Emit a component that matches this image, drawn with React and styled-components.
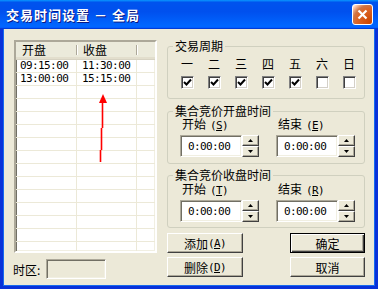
import React from "react";
import styled, { createGlobalStyle } from "styled-components";

const GlobalStyle = createGlobalStyle`
  html, body { margin: 0; padding: 0; background: #fff; }
  body {
    font-family: "Liberation Sans", "Noto Sans CJK SC", sans-serif;
    font-size: 12px;
    color: #000;
  }
  * { box-sizing: border-box; }
`;

const Window = styled.div`
  width: 378px;
  height: 289px;
  display: flex;
  flex-direction: column;
  overflow: hidden;
`;

const TitleBar = styled.div`
  height: 29px;
  flex: none;
  display: flex;
  align-items: center;
  justify-content: space-between;
  padding: 0 5px 0 6px;
  background: linear-gradient(
    180deg,
    #0997ff,
    #0053ee 8%,
    #0050ee 40%,
    #06f 88%,
    #06f 93%,
    #005bff 95%,
    #003dd7 96%,
    #003dd7
  );
`;

const Title = styled.div`
  color: #fff;
  font-family: "Noto Sans CJK SC", sans-serif;
  font-weight: 700;
  font-size: 13px;
  letter-spacing: 1px;
  text-shadow: 1px 1px #0a1883;
`;

const CloseButton = styled.div`
  width: 21px;
  height: 21px;
  border: 1px solid #fff;
  border-radius: 3px;
  display: flex;
  align-items: center;
  justify-content: center;
  background: radial-gradient(
    circle at 90% 90%,
    #cc4600 0,
    #dc6527 55%,
    #cd7546 70%,
    #ffccb2 90%,
    #fff 100%
  );
`;

const Frame = styled.div`
  flex: 1;
  display: flex;
  gap: 10px;
  padding: 11px 0 0 11px;
  background: #ece9d8;
  border: 3px solid #0831d9;
  border-top: none;
  box-shadow: inset 1px 0 #166aee, inset -1px 0 #166aee, inset 0 -1px #166aee;
`;

const LeftCol = styled.div`
  width: 143px;
  display: flex;
  flex-direction: column;
`;

const List = styled.div`
  position: relative;
  height: 213px;
  background: #fff;
  border: 2px solid;
  border-color: #aca899 #fff #fff #aca899;
  box-shadow: inset 1px 1px #716f64, inset -1px -1px #f1efe2;
  overflow: hidden;
`;

const HeaderRow = styled.div`
  display: grid;
  grid-template-columns: 61px 60px 1fr;
  height: 18px;
  background: #ebeadb;
  border-bottom: 1px solid #d6d2c2;
  box-shadow: inset 0 -2px #e2decd;
`;

const HeaderCell = styled.div`
  position: relative;
  padding: 0 0 0 6px;
  font-family: "Noto Sans CJK SC", sans-serif;
  line-height: 16px;
  &:not(:last-child)::after {
    content: "";
    position: absolute;
    right: 0;
    top: 3px;
    bottom: 4px;
    width: 1px;
    background: #aca899;
    box-shadow: 1px 0 #fff;
  }
`;

const Row = styled.div`
  display: grid;
  grid-template-columns: 61px 60px 1fr;
  height: 13px;
  border-bottom: 1px solid #ece9d8;
`;

const Cell = styled.div`
  padding-left: ${(p) => (p.$first ? 4 : 5)}px;
  border-right: 1px solid #ece9d8;
  font-family: "DejaVu Sans Mono", monospace;
  font-size: 11px;
  letter-spacing: -0.6px;
  line-height: 12px;
  &:last-child { border-right: none; }
`;

const Arrow = styled.svg`
  position: absolute;
  left: 0;
  top: 0;
  pointer-events: none;
`;

const ZoneRow = styled.div`
  display: flex;
  align-items: center;
  margin-top: 6px;
  height: 20px;
`;

const ZoneLabel = styled.div`
  width: 33px;
  margin-left: -1px;
  font-family: "Noto Sans CJK SC", sans-serif;
`;

const ZoneBox = styled.div`
  width: 60px;
  height: 20px;
  background: #ece9d8;
  border: 1px solid;
  border-color: #aca899 #fff #fff #aca899;
  box-shadow: inset 1px 1px #716f64, inset -1px -1px #f1efe2;
`;

const RightCol = styled.div`
  width: 198px;
  display: flex;
  flex-direction: column;
`;

const Group = styled.fieldset`
  margin: ${(p) => p.$top || 0}px 0 0;
  padding: ${(p) => p.$pt}px 0 ${(p) => p.$pb}px 0;
  border: 1px solid #d0d0bf;
  border-radius: 3px;
  min-inline-size: 0;
`;

const Legend = styled.legend`
  margin-left: 5px;
  padding: 0 2px;
  line-height: 12px;
  font-family: "Noto Sans CJK SC", sans-serif;
`;

const WeekGrid = styled.div`
  display: grid;
  grid-template-columns: repeat(7, 13px);
  column-gap: 14px;
  row-gap: 6px;
  margin-left: 13px;
  font-family: "Noto Sans CJK SC", sans-serif;
  line-height: 12px;
`;

const Check = styled.span`
  width: 13px;
  height: 13px;
  display: flex;
  align-items: center;
  justify-content: center;
  background: #fff;
  border: 1px solid;
  border-color: #808080 #fff #fff #808080;
  box-shadow: inset 1px 1px #404040, inset -1px -1px #d4d0c8;
`;

const TimeGrid = styled.div`
  display: grid;
  grid-template-columns: 79px 79px;
  column-gap: 17px;
  row-gap: 3px;
  margin-left: 12px;
`;

const FieldLabel = styled.div`
  margin-left: 2px;
  line-height: 12px;
  font-family: "Noto Sans CJK SC", sans-serif;
`;

const Key = styled.span`
  font-family: "DejaVu Sans Mono", monospace;
  font-size: 11px;
  letter-spacing: -0.6px;
  margin-left: ${(p) => (p.$gap ? 4 : 0)}px;
  u { text-underline-offset: 1px; }
`;

const Spin = styled.div`
  display: flex;
  height: 22px;
`;

const SpinEdit = styled.div`
  flex: 1;
  display: flex;
  align-items: center;
  padding-left: 7px;
  background: #fff;
  border: 1px solid;
  border-color: #aca899 #fff #fff #aca899;
  box-shadow: inset 1px 1px #716f64, inset -1px -1px #f1efe2;
  font-family: "DejaVu Sans Mono", monospace;
  font-size: 11px;
  letter-spacing: -0.6px;
`;

const SpinButtons = styled.div`
  width: 17px;
  display: flex;
  flex-direction: column;
`;

const SpinBtn = styled.div`
  flex: 1;
  display: flex;
  align-items: center;
  justify-content: center;
  background: #ece9d8;
  border: 1px solid;
  border-color: #fff #404040 #404040 #fff;
  box-shadow: inset -1px -1px #aca899;
`;

const Buttons = styled.div`
  display: grid;
  grid-template-columns: 76px 75px;
  justify-content: space-between;
  row-gap: 4px;
  margin-top: 5px;
`;

const Button = styled.div`
  height: 20px;
  display: flex;
  align-items: center;
  justify-content: center;
  background: #ece9d8;
  font-family: "Noto Sans CJK SC", sans-serif;
  border: 1px solid;
  border-color: ${(p) => (p.$default ? "#000" : "#fff #404040 #404040 #fff")};
  box-shadow: ${(p) =>
    p.$default
      ? "inset 1px 1px #fff, inset -1px -1px #404040, inset -2px -2px #aca899"
      : "inset -1px -1px #aca899"};
`;

const Tick = () => (
  <svg width="9" height="9" viewBox="0 0 9 9">
    <path d="M1 4 L3.5 6.5 L8 1.5" fill="none" stroke="#000" strokeWidth="2" />
  </svg>
);

const Tri = ({ up }) => (
  <svg width="5" height="3" viewBox="0 0 5 3">
    <path d={up ? "M0 3 L2.5 0 L5 3 Z" : "M0 0 L5 0 L2.5 3 Z"} fill="#000" />
  </svg>
);

const TimeSpin = () => (
  <Spin>
    <SpinEdit>0:00:00</SpinEdit>
    <SpinButtons>
      <SpinBtn>
        <Tri up />
      </SpinBtn>
      <SpinBtn>
        <Tri />
      </SpinBtn>
    </SpinButtons>
  </Spin>
);

const Label = ({ text, k }) => (
  <FieldLabel>
    {text}
    <Key $gap>
      (<u>{k}</u>)
    </Key>
  </FieldLabel>
);

const days = ["一", "二", "三", "四", "五", "六", "日"];
const rows = [
  ["09:15:00", "11:30:00"],
  ["13:00:00", "15:15:00"],
];

export default function App() {
  const emptyRows = Array.from({ length: 13 });
  return (
    <Window>
      <GlobalStyle />
      <TitleBar>
        <Title>交易时间设置 － 全局</Title>
        <CloseButton>
          <svg width="11" height="11" viewBox="0 0 11 11">
            <path d="M1.5 1.5 L9.5 9.5 M9.5 1.5 L1.5 9.5" stroke="#fff" strokeWidth="2.2" />
          </svg>
        </CloseButton>
      </TitleBar>
      <Frame>
        <LeftCol>
          <List>
            <HeaderRow>
              <HeaderCell>开盘</HeaderCell>
              <HeaderCell>收盘</HeaderCell>
              <HeaderCell />
            </HeaderRow>
            {rows.map((r, i) => (
              <Row key={i}>
                <Cell $first>{r[0]}</Cell>
                <Cell>{r[1]}</Cell>
                <Cell />
              </Row>
            ))}
            {emptyRows.map((_, i) => (
              <Row key={`e${i}`}>
                <Cell $first />
                <Cell />
                <Cell />
              </Row>
            ))}
            <Arrow width="139" height="209" viewBox="0 0 139 209">
              <path d="M87 52 L91 61 L83 61 Z" fill="#f00" />
              <path d="M86.5 61 V86 M85.5 86 V108 M84.5 108 V120" stroke="#f00" strokeWidth="1.6" fill="none" />
            </Arrow>
          </List>
          <ZoneRow>
            <ZoneLabel>时区:</ZoneLabel>
            <ZoneBox />
          </ZoneRow>
        </LeftCol>
        <RightCol>
          <Group $pt={6} $pb={9}>
            <Legend>交易周期</Legend>
            <WeekGrid>
              {days.map((d) => (
                <span key={d}>{d}</span>
              ))}
              {days.map((d, i) => (
                <Check key={d}>{i < 5 && <Tick />}</Check>
              ))}
            </WeekGrid>
          </Group>
          <Group $top={6} $pt={1} $pb={6}>
            <Legend>集合竞价开盘时间</Legend>
            <TimeGrid>
              <Label text="开始" k="S" />
              <Label text="结束" k="E" />
              <TimeSpin />
              <TimeSpin />
            </TimeGrid>
          </Group>
          <Group $top={5} $pt={2} $pb={5}>
            <Legend>集合竞价收盘时间</Legend>
            <TimeGrid>
              <Label text="开始" k="T" />
              <Label text="结束" k="R" />
              <TimeSpin />
              <TimeSpin />
            </TimeGrid>
          </Group>
          <Buttons>
            <Button>
              添加<Key>(<u>A</u>)</Key>
            </Button>
            <Button $default>确定</Button>
            <Button>
              删除<Key>(<u>D</u>)</Key>
            </Button>
            <Button>取消</Button>
          </Buttons>
        </RightCol>
      </Frame>
    </Window>
  );
}
